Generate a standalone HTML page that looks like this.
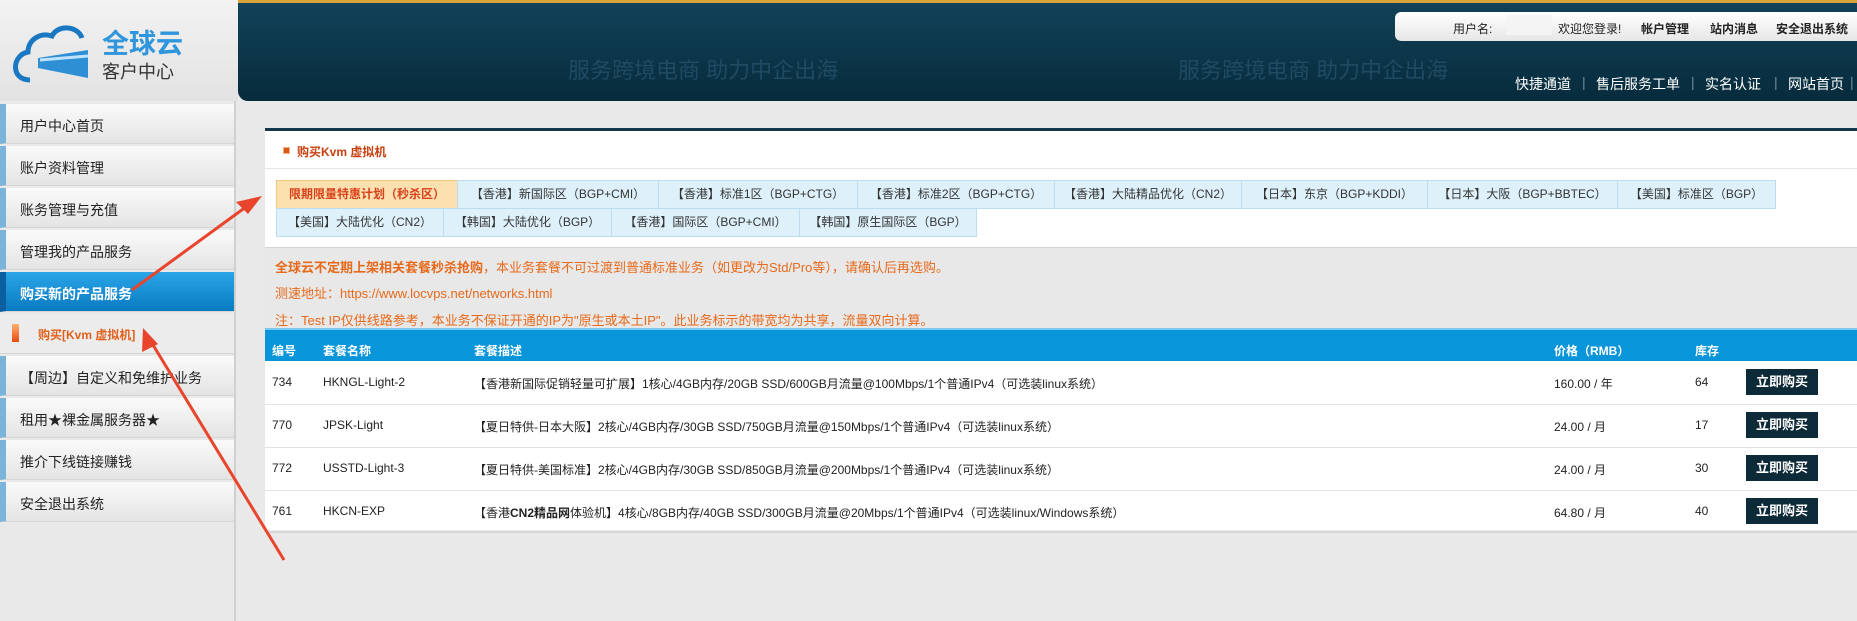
<!DOCTYPE html>
<html><head><meta charset="utf-8"><style>
*{margin:0;padding:0;box-sizing:border-box}
body{width:1857px;height:621px;overflow:hidden;background:#e9e9e9;font-family:"Liberation Sans","Noto Sans CJK SC",sans-serif;position:relative}
.a{position:absolute}
.logo{left:0;top:0;width:238px;height:102px;background:linear-gradient(#f2f2f2,#e2e2e2)}
.banner{left:238px;top:0;width:1619px;height:101px;background:linear-gradient(#124258,#062b3c);border-top:3px solid #d9a53a;border-radius:0 0 0 10px}
.ubar{left:1395px;top:12px;width:462px;height:29px;background:linear-gradient(#fff,#e6e6e6);border-radius:6px 0 0 6px;font-size:12px;color:#222}
.ubar span{position:absolute;top:8px;white-space:nowrap}
.nav{top:74px;font-size:14px;color:#fff}
.sep{top:74px;font-size:14px;color:#6a8c9c}
.side{left:0;top:101px;width:236px;height:520px;border-right:2px solid #d0d0d0;background:#e9e9e9}
.it{position:absolute;left:0;width:234px;height:40px;background:linear-gradient(#fafafa,#e4e4e4);border-left:6px solid #7ab5d9;font-size:14px;color:#222;padding:12px 0 0 14px;border-bottom:1px solid #d5d5d5}
.it.on{background:linear-gradient(#2aa6e8,#0a7ac0);color:#fff;font-weight:bold;border-left-color:#0b5fa0}
.it.sub{background:#ececec;border-left:none;color:#e0601a;font-weight:bold;font-size:12px;padding-left:38px}
.panel{left:265px;top:128px;width:1592px;height:402px;background:#fff;border-top:3px solid #14384a}
.tab{position:absolute;height:29px;background:#def1fb;border:1px solid #bcdcef;font-size:12px;color:#333;text-align:center;line-height:27px}
.th{font-size:12px;font-weight:bold;color:#fff;top:342px}
.td{font-size:12px;color:#222}
.btn{position:absolute;left:1746px;width:72px;height:26px;background:#0d2a38;color:#fff;font-size:13px;font-weight:bold;text-align:center;line-height:26px}
.row{position:absolute;left:265px;width:1592px;height:1px;background:#e2e2e2}
</style></head><body>
<div class="a logo">
<svg width="238" height="102" style="position:absolute;left:0;top:0"><path d="M30 80 C10 80 12 55 28 52 C28 40 40 32 52 36 C58 24 78 26 82 38" fill="none" stroke="#1a78c2" stroke-width="5"/><path d="M38 58 L88 50 L88 78 L38 68Z" fill="#2f8fd4"/><path d="M40 60 L88 56" stroke="#bfe3ff" stroke-width="3"/></svg>
<div class="a" style="left:102px;top:22px;font-size:27px;font-weight:bold;color:#2f95dc">全球云</div>
<div class="a" style="left:102px;top:58px;font-size:18px;color:#333">客户中心</div>
</div>
<div class="a banner">
<div class="a" style="left:330px;top:50px;font-size:22px;color:#1f4a62">服务跨境电商 助力中企出海</div>
<div class="a" style="left:940px;top:50px;font-size:22px;color:#1f4a62">服务跨境电商 助力中企出海</div>
</div>
<div class="a ubar"><span style="left:58px">用户名:</span><span style="left:111px;top:3px;width:46px;height:20px;background:#f4f4f4"></span><span style="left:163px">欢迎您登录!</span><span style="left:246px;font-weight:bold">帐户管理</span><span style="left:315px;font-weight:bold">站内消息</span><span style="left:381px;font-weight:bold">安全退出系统</span></div>
<div class="a nav" style="left:1515px">快捷通道</div>
<div class="a sep" style="left:1582px">|</div>
<div class="a nav" style="left:1596px">售后服务工单</div>
<div class="a sep" style="left:1691px">|</div>
<div class="a nav" style="left:1705px">实名认证</div>
<div class="a sep" style="left:1774px">|</div>
<div class="a nav" style="left:1788px">网站首页</div>
<div class="a sep" style="left:1850px">|</div>

<div class="a side">
<div class="it" style="top:3px">用户中心首页</div>
<div class="it" style="top:45px">账户资料管理</div>
<div class="it" style="top:87px">账务管理与充值</div>
<div class="it" style="top:129px">管理我的产品服务</div>
<div class="it on" style="top:171px">购买新的产品服务</div>
<div class="it sub" style="top:213px"><span style="position:absolute;left:12px;top:10px;width:7px;height:18px;background:linear-gradient(#ffb070,#e84c10)"></span>购买[Kvm 虚拟机]</div>
<div class="it" style="top:255px">【周边】自定义和免维护业务</div>
<div class="it" style="top:297px">租用★裸金属服务器★</div>
<div class="it" style="top:339px">推介下线链接赚钱</div>
<div class="it" style="top:381px">安全退出系统</div>
</div>

<div class="a panel">
<div class="a" style="left:0;top:0;width:1592px;height:38px;border-bottom:1px solid #e5e5e5"></div>
<div class="a" style="left:18px;top:16px;width:7px;height:7px;background:#d8581a;border:1px solid #f0b080"></div>
<div class="a" style="left:32px;top:12px;font-size:12px;font-weight:bold;color:#c8400e">购买Kvm 虚拟机</div>
<div class="a" style="left:0;top:116px;width:1592px;height:82px;background:#e8e8e8;border-top:1px solid #d4d4d4"></div>
<div class="a" style="left:10px;top:126px;font-size:13px;color:#e76a1c"><b>全球云不定期上架相关套餐秒杀抢购</b>，本业务套餐不可过渡到普通标准业务（如更改为Std/Pro等），请确认后再选购。</div>
<div class="a" style="left:10px;top:152px;font-size:13px;color:#e76a1c">测速地址：https://www.locvps.net/networks.html</div>
<div class="a" style="left:10px;top:179px;font-size:13px;color:#e76a1c">注：Test IP仅供线路参考，本业务不保证开通的IP为"原生或本土IP"。此业务标示的带宽均为共享，流量双向计算。</div>
</div>
<div class="tab" style="left:276px;top:180px;width:182px;background:#fde0b0;border-color:#f0c880;color:#d8401a;font-weight:bold">限期限量特惠计划（秒杀区）</div>
<div class="tab" style="left:457px;top:180px;width:202px">【香港】新国际区（BGP+CMI）</div>
<div class="tab" style="left:658px;top:180px;width:200px">【香港】标准1区（BGP+CTG）</div>
<div class="tab" style="left:857px;top:180px;width:198px">【香港】标准2区（BGP+CTG）</div>
<div class="tab" style="left:1054px;top:180px;width:188px">【香港】大陆精品优化（CN2）</div>
<div class="tab" style="left:1241px;top:180px;width:187px">【日本】东京（BGP+KDDI）</div>
<div class="tab" style="left:1427px;top:180px;width:191px">【日本】大阪（BGP+BBTEC）</div>
<div class="tab" style="left:1617px;top:180px;width:159px">【美国】标准区（BGP）</div>
<div class="tab" style="left:276px;top:208px;width:168px">【美国】大陆优化（CN2）</div>
<div class="tab" style="left:443px;top:208px;width:169px">【韩国】大陆优化（BGP）</div>
<div class="tab" style="left:611px;top:208px;width:189px">【香港】国际区（BGP+CMI）</div>
<div class="tab" style="left:799px;top:208px;width:178px">【韩国】原生国际区（BGP）</div>

<div class="a" style="left:265px;top:328px;width:1592px;height:33px;background:#0995da;border-top:2px solid #7cc8ee"></div>
<div class="a th" style="left:272px">编号</div>
<div class="a th" style="left:323px">套餐名称</div>
<div class="a th" style="left:474px">套餐描述</div>
<div class="a th" style="left:1554px">价格（RMB）</div>
<div class="a th" style="left:1695px">库存</div>

<div class="row" style="top:404px"></div><div class="row" style="top:447px"></div><div class="row" style="top:490px"></div>
<div class="a" style="left:265px;top:531px;width:1592px;height:2px;background:#d8d8d8"></div>

<div class="a td" style="left:272px;top:375px">734</div><div class="a td" style="left:323px;top:375px">HKNGL-Light-2</div><div class="a td" style="left:474px;top:375px">【香港新国际促销轻量可扩展】1核心/4GB内存/20GB SSD/600GB月流量@100Mbps/1个普通IPv4（可选装linux系统）</div><div class="a td" style="left:1554px;top:375px">160.00 / 年</div><div class="a td" style="left:1695px;top:375px">64</div><div class="btn" style="top:369px">立即购买</div>
<div class="a td" style="left:272px;top:418px">770</div><div class="a td" style="left:323px;top:418px">JPSK-Light</div><div class="a td" style="left:474px;top:418px">【夏日特供-日本大阪】2核心/4GB内存/30GB SSD/750GB月流量@150Mbps/1个普通IPv4（可选装linux系统）</div><div class="a td" style="left:1554px;top:418px">24.00 / 月</div><div class="a td" style="left:1695px;top:418px">17</div><div class="btn" style="top:412px">立即购买</div>
<div class="a td" style="left:272px;top:461px">772</div><div class="a td" style="left:323px;top:461px">USSTD-Light-3</div><div class="a td" style="left:474px;top:461px">【夏日特供-美国标准】2核心/4GB内存/30GB SSD/850GB月流量@200Mbps/1个普通IPv4（可选装linux系统）</div><div class="a td" style="left:1554px;top:461px">24.00 / 月</div><div class="a td" style="left:1695px;top:461px">30</div><div class="btn" style="top:455px">立即购买</div>
<div class="a td" style="left:272px;top:504px">761</div><div class="a td" style="left:323px;top:504px">HKCN-EXP</div><div class="a td" style="left:474px;top:504px">【香港<b>CN2精品网</b>体验机】4核心/8GB内存/40GB SSD/300GB月流量@20Mbps/1个普通IPv4（可选装linux/Windows系统）</div><div class="a td" style="left:1554px;top:504px">64.80 / 月</div><div class="a td" style="left:1695px;top:504px">40</div><div class="btn" style="top:498px">立即购买</div>

<svg class="a" style="left:0;top:0" width="1857" height="621">
<g stroke="#e8452c" stroke-width="3" fill="#e8452c">
<line x1="132" y1="290" x2="250" y2="204"/>
<polygon points="262,196 236,202 248,214" stroke="none"/>
<line x1="284" y1="560" x2="150" y2="340"/>
<polygon points="143,328 142,352 158,344" stroke="none"/>
</g></svg>
</body></html>
